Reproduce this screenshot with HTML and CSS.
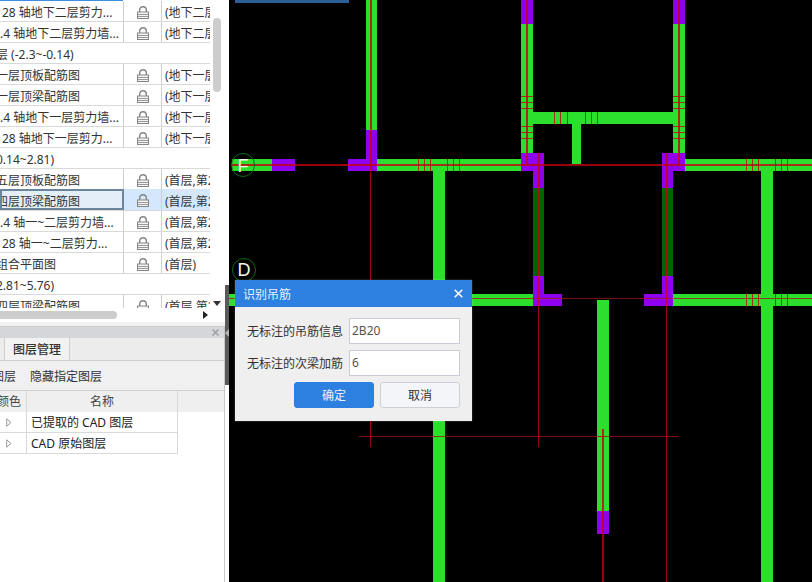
FILE: index.html
```html
<!DOCTYPE html>
<html lang="zh">
<head>
<meta charset="utf-8">
<title>识别吊筋</title>
<link rel="stylesheet" href="styles.css">
</head>
<body>
<svg width="0" height="0" class="defs">
  <defs>
    <symbol id="lock" viewBox="0 0 12 13">
      <path d="M2.700 6.500V4C2.700 1.900 4.100.8 6 .8s3.300 1.100 3.300 3.200V6.500" fill="none" stroke="#858585" stroke-width="1.400"/>
      <rect x=".5" y="6" width="11" height="6.500" fill="#f4f4f4" stroke="#858585"/>
      <path d="M1 8.500h10M1 10.500h10" stroke="#999" stroke-width="1"/>
    </symbol>
    <symbol id="tri" viewBox="0 0 6 9">
      <path d="M.7.8L5 4.500.7 8.200z" fill="#fff" stroke="#999"/>
    </symbol>
  </defs>
</svg>
<div class="app">
  <aside class="side">
    <section class="tree">
      <div class="tree-clip">
        <div class="top-mark"></div>
        <div class="row"><div class="c-name"><span class="in-2">28 轴地下二层剪力...</span></div><div class="c-lock"><svg class="lock"><use href="#lock"/></svg></div><div class="c-floor">(地下二层,第</div></div>
        <div class="row"><div class="c-name"><span class="in-0">.4 轴地下二层剪力墙...</span></div><div class="c-lock"><svg class="lock"><use href="#lock"/></svg></div><div class="c-floor">(地下二层,第</div></div>
        <div class="row group"><span class="in-n">层 (-2.3~-0.14)</span></div>
        <div class="row"><div class="c-name"><span class="in-n">一层顶板配筋图</span></div><div class="c-lock"><svg class="lock"><use href="#lock"/></svg></div><div class="c-floor">(地下一层,第</div></div>
        <div class="row"><div class="c-name"><span class="in-n">一层顶梁配筋图</span></div><div class="c-lock"><svg class="lock"><use href="#lock"/></svg></div><div class="c-floor">(地下一层,第</div></div>
        <div class="row"><div class="c-name"><span class="in-0">.4 轴地下一层剪力墙...</span></div><div class="c-lock"><svg class="lock"><use href="#lock"/></svg></div><div class="c-floor">(地下一层,第</div></div>
        <div class="row"><div class="c-name"><span class="in-2">28 轴地下一层剪力...</span></div><div class="c-lock"><svg class="lock"><use href="#lock"/></svg></div><div class="c-floor">(地下一层,第</div></div>
        <div class="row group"><span class="in-n">0.14~2.81)</span></div>
        <div class="row"><div class="c-name"><span class="in-n">五层顶板配筋图</span></div><div class="c-lock"><svg class="lock"><use href="#lock"/></svg></div><div class="c-floor">(首层,第2层)</div></div>
        <div class="row selected"><div class="c-name"><span class="in-n">四层顶梁配筋图</span></div><div class="c-lock"><svg class="lock"><use href="#lock"/></svg></div><div class="c-floor">(首层,第2层)</div></div>
        <div class="row"><div class="c-name"><span class="in-0">.4 轴一~二层剪力墙...</span></div><div class="c-lock"><svg class="lock"><use href="#lock"/></svg></div><div class="c-floor">(首层,第2层)</div></div>
        <div class="row"><div class="c-name"><span class="in-2">28 轴一~二层剪力...</span></div><div class="c-lock"><svg class="lock"><use href="#lock"/></svg></div><div class="c-floor">(首层,第2层)</div></div>
        <div class="row"><div class="c-name"><span class="in-n">组合平面图</span></div><div class="c-lock"><svg class="lock"><use href="#lock"/></svg></div><div class="c-floor">(首层)</div></div>
        <div class="row group"><span class="in-n">2.81~5.76)</span></div>
        <div class="row"><div class="c-name"><span class="in-n">四层顶梁配筋图</span></div><div class="c-lock"><svg class="lock"><use href="#lock"/></svg></div><div class="c-floor">(首层,第2层)</div></div>
      </div>
      <div class="vthumb"></div>
      <div class="arrow-down"></div>
      <div class="hthumb"></div>
      <div class="arrow-right"></div>
    </section>
    <section class="layers">
      <header class="layers-title"><svg class="small-x" viewBox="0 0 7 7"><path d="M.5.5l6 6M6.500.5l-6 6" stroke="#9a9a9a" stroke-width="1.300"/></svg></header>
      <nav class="tabs"><div class="tab-stub"></div><div class="tab">图层管理</div></nav>
      <div class="toolbar"><span class="tool-cut">图层</span><span>隐藏指定图层</span></div>
      <div class="lrow lhead"><div class="l-color"><span class="head-cut">颜色</span></div><div class="l-name center">名称</div></div>
      <div class="lrow"><div class="l-color"><svg class="tri"><use href="#tri"/></svg></div><div class="l-name">已提取的 CAD 图层</div></div>
      <div class="lrow"><div class="l-color"><svg class="tri"><use href="#tri"/></svg></div><div class="l-name">CAD 原始图层</div></div>
    </section>
  </aside>
  <div class="splitter"><div class="handle"><span class="handle-arrow"></span></div></div>
  <main class="canvas">
    <svg class="drawing" viewBox="229 0 583 582" width="583" height="582" shape-rendering="crispEdges">
      <rect x="235" y="0" width="114" height="3" fill="#2d5f97"/>
      <g fill="#2ddf2d">
        <rect x="366" y="0" width="11" height="130"/>
        <rect x="232" y="159" width="40" height="12"/>
        <rect x="377" y="159" width="144" height="12"/>
        <rect x="433" y="171" width="12" height="411"/>
        <rect x="521" y="24" width="12" height="129"/>
        <rect x="673" y="24" width="12" height="129"/>
        <rect x="533" y="112" width="140" height="12"/>
        <rect x="572" y="124" width="9" height="40"/>
        <rect x="685" y="159" width="127" height="12"/>
        <rect x="761" y="171" width="12" height="411"/>
        <rect x="229" y="294" width="304" height="12"/>
        <rect x="673" y="294" width="139" height="12"/>
        <rect x="597" y="300" width="12" height="211"/>
      </g>
      <g fill="#006400">
        <rect x="533" y="188" width="11" height="88"/>
        <rect x="662" y="188" width="11" height="88"/>
      </g>
      <g fill="#9000f0">
        <rect x="272" y="159" width="23" height="12"/>
        <path d="M366 130h11v41h-29v-12h18z"/>
        <rect x="521" y="0" width="12" height="24"/>
        <rect x="673" y="0" width="12" height="24"/>
        <path d="M521 153h23v35h-11v-17h-12z"/>
        <path d="M662 153h23v18h-12v17h-11z"/>
        <path d="M533 276h11v18h18v12h-29z"/>
        <path d="M662 276h11v30h-29v-12h18z"/>
        <rect x="597" y="511" width="12" height="23"/>
      </g>
      <g class="cad-line thick">
        <path d="M232 165H812"/>
        <path d="M371 0V171M527 0V165M679 0V165M603 429V582M539 153V188M667 153V188"/>
      </g>
      <g class="cad-line">
        <path class="faint" d="M229 298.500H812M359 436.500H679"/>
        <path d="M370.500 171V447M538.500 188V447M666.500 188V582"/>
        <path d="M418.500 159v12M424.500 159v12M430.500 159v12M447.500 159v12M453.500 159v12M459.500 159v12"/>
        <path d="M746.500 159v12M752.500 159v12M758.500 159v12M775.500 159v12M781.500 159v12M787.500 159v12"/>
        <path d="M746.500 294v12M752.500 294v12M758.500 294v12M775.500 294v12M781.500 294v12M787.500 294v12"/>
        <path d="M554.500 112v12M560.500 112v12M567.500 112v12M585.500 112v12M591.500 112v12M597.500 112v12"/>
        <path d="M521 96.500h12M521 102.500h12M521 108.500h12M521 126.500h12M521 132.500h12M521 138.500h12"/>
        <path d="M673 96.500h12M673 102.500h12M673 108.500h12M673 126.500h12M673 132.500h12M673 138.500h12"/>
      </g>
      <g class="axis-ring">
        <circle cx="243" cy="165" r="11.500"/>
        <circle cx="244" cy="270" r="11.500"/>
      </g>
      <text x="243" y="172" class="axis">F</text>
      <text x="244" y="276" class="axis">D</text>
    </svg>
    <div class="dialog">
      <header class="dlg-title"><span>识别吊筋</span><svg class="dlg-close" viewBox="0 0 9 9"><path d="M.7.7l7.600 7.600M8.300.7L.7 8.300" stroke="#fff" stroke-width="1.500"/></svg></header>
      <div class="dlg-body">
        <div class="field"><label>无标注的吊筋信息</label><div class="input">2B20</div></div>
        <div class="field"><label>无标注的次梁加筋</label><div class="input">6</div></div>
        <div class="buttons"><button class="btn primary">确定</button><button class="btn">取消</button></div>
      </div>
    </div>
  </main>
</div>
</body>
</html>
```
FILE: styles.css
```css
* { box-sizing: border-box; }
html, body { margin: 0; padding: 0; background: #000; }
body { font-family: "Noto Sans", "Noto Sans CJK SC", "Liberation Sans", sans-serif; font-size: 12px; color: #333; overflow: hidden; }
.defs { position: absolute; }
.app { display: flex; width: 812px; height: 582px; overflow: hidden; }

.side { width: 225px; flex: none; display: flex; flex-direction: column; background: #fff; }
.splitter { width: 4px; flex: none; background: #fff; padding-top: 285px; }
.handle { height: 100px; background: #5a5a5a; padding-top: 44px; }
.handle-arrow { display: block; width: 0; height: 0; border: 4px solid transparent; border-left-width: 0; border-right: 4px solid #b5b5b5; }

.tree { position: relative; height: 327px; flex: none; background: #fff; border-bottom: 1px solid #c9c9c9; box-shadow: inset 0 -4px 0 #f2f2f2; }
.tree-clip { width: 210px; height: 308px; overflow: hidden; }
.top-mark { width: 123px; height: 1px; background: #3f8fe0; }
.row { display: flex; height: 21px; border-bottom: 1px solid #d9d9d9; line-height: 24px; white-space: nowrap; overflow: hidden; }
.c-name { width: 124px; flex: none; border-right: 1px solid #cfcfcf; overflow: hidden; }
.c-lock { width: 38px; flex: none; border-right: 1px solid #cfcfcf; display: flex; align-items: center; justify-content: center; padding-top: 2px; }
.c-floor { flex: 1; padding-left: 3px; overflow: hidden; }
.lock { width: 12px; height: 13px; }
.in-2 { margin-left: 2px; }
.in-0 { margin-left: 0; }
.in-n { margin-left: -4px; display: inline-block; }
.selected { background: #d4e7fb; height: 22px; margin-top: -1px; line-height: 25px; }
.selected .c-name { background: #e4eef8; border: 2px solid #6c849c; line-height: 21px; }
.selected .c-name span { margin-left: -6px; }

.vthumb { position: absolute; left: 213px; top: 18px; width: 8px; height: 74px; background: #cdcdcd; border-radius: 4px; }
.hthumb { position: absolute; left: 0; top: 311px; width: 117px; height: 8px; background: #cdcdcd; border-radius: 0 4px 4px 0; }
.arrow-down { position: absolute; left: 213px; top: 301px; width: 0; height: 0; border: 4px solid transparent; border-top: 5px solid #333; border-bottom-width: 0; }
.arrow-right { position: absolute; left: 203px; top: 311px; width: 0; height: 0; border: 4px solid transparent; border-left: 5px solid #222; border-right-width: 0; }

.layers { flex: 1; display: flex; flex-direction: column; border-right: 1px solid #c9c9c9; background: #fff; }
.layers-title { height: 11px; background: #d4d6da; display: flex; justify-content: flex-end; align-items: center; padding-right: 5px; flex: none; }
.small-x { width: 7px; height: 7px; }
.tabs { height: 23px; display: flex; flex: none; background: #ececec; border-bottom: 1px solid #cfcfcf; }
.tab-stub { width: 5px; border-right: 1px solid #cfcfcf; }
.tab { width: 65px; background: #f2f2f2; border-right: 1px solid #cfcfcf; text-align: center; line-height: 24px; font-weight: 500; color: #333; }
.toolbar { height: 30px; flex: none; display: flex; align-items: center; background: #f0f0f0; border-bottom: 1px solid #cfcfcf; gap: 14px; }
.tool-cut { margin-left: -8px; }
.lrow { display: flex; width: 178px; height: 21px; border-bottom: 1px solid #d9d9d9; line-height: 21px; flex: none; }
.lhead { width: auto; background: #efefef; border-bottom: none; color: #444; }
.lhead .l-name { width: 151px; border-right: 1px solid #d9d9d9; }
.l-color { width: 27px; flex: none; border-right: 1px solid #d9d9d9; overflow: hidden; padding-left: 6px; display: flex; align-items: center; }
.head-cut { margin-left: -9px; white-space: nowrap; }
.tri { width: 6px; height: 9px; }
.l-name { flex: 1; padding-left: 4px; border-right: 1px solid #d9d9d9; color: #222; }
.l-name.center { flex: none; padding: 0; text-align: center; color: #444; }

.canvas { position: relative; flex: 1; background: #000; overflow: hidden; }
.drawing { display: block; }
.cad-line { fill: none; stroke: #c00010; stroke-width: 1; stroke-opacity: .8; }
.cad-line.thick { stroke-width: 2; }
.cad-line .faint { stroke: #a01010; }
.axis-ring { fill: none; stroke: #0a6a18; stroke-width: 1; shape-rendering: geometricPrecision; }
.axis { fill: #f0f8f0; font-size: 18px; font-family: "Liberation Sans", sans-serif; text-anchor: middle; }

.dialog { position: absolute; left: 6px; top: 280px; width: 237px; height: 141px; background: #efefef; box-shadow: 0 0 2px rgba(255,255,255,.3); }
.dlg-title { height: 27px; background: #2d7fe0; color: #e8f2ff; display: flex; align-items: center; justify-content: space-between; padding: 0 9px 0 8px; }
.dlg-close { width: 9px; height: 9px; }
.dlg-body { padding: 11px 12px 0 12px; display: flex; flex-direction: column; gap: 6px; }
.field { display: flex; align-items: center; height: 26px; gap: 6px; }
.field label { width: 96px; flex: none; white-space: nowrap; color: #333; }
.input { width: 111px; height: 26px; background: #fff; border: 1px solid #c8ccd4; padding-left: 2px; line-height: 24px; color: #555; }
.buttons { display: flex; justify-content: flex-end; gap: 6px; }
.btn { width: 80px; height: 26px; padding: 0; font: inherit; color: #333; background: #f4f5f8; border: 1px solid #ccd0d6; border-radius: 3px; }
.btn.primary { background: #2d7fe0; border-color: #2d7fe0; color: #e8f2ff; }
```
